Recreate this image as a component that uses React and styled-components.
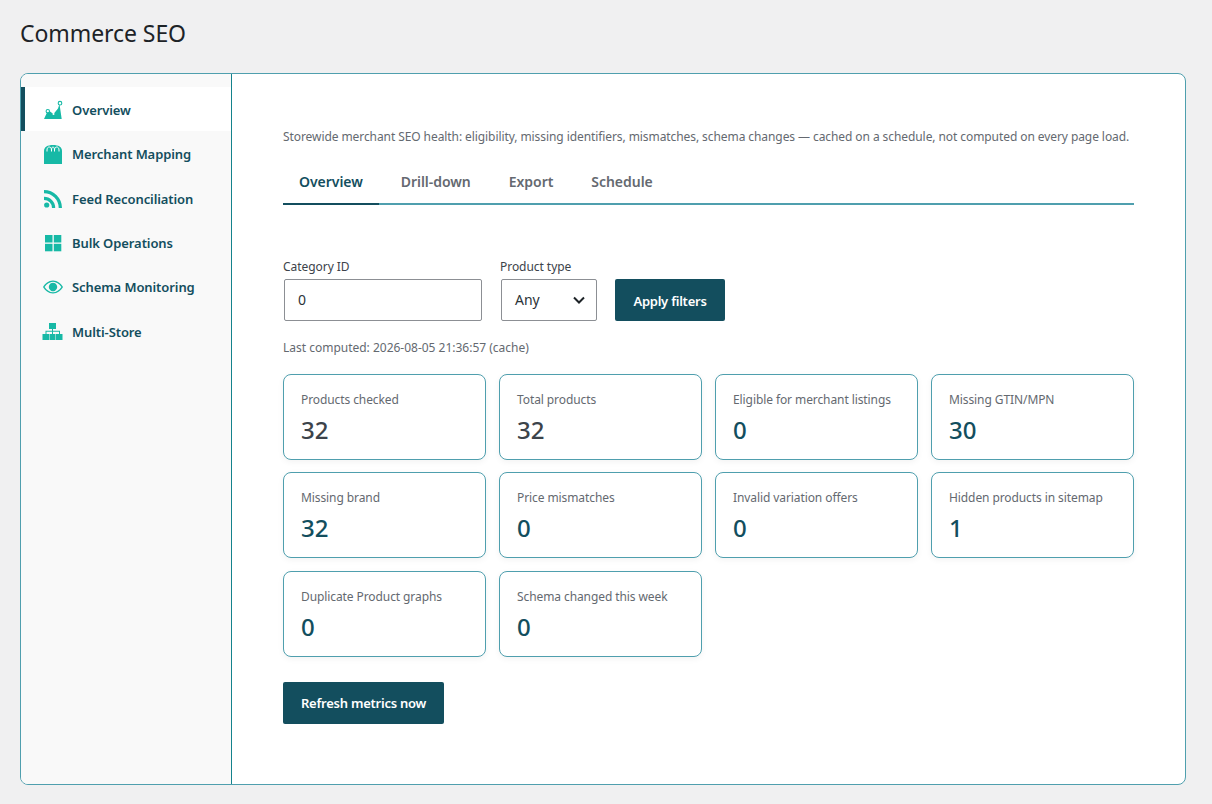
import React from 'react';
import styled, { createGlobalStyle } from 'styled-components';

const GlobalStyle = createGlobalStyle`
  html, body {
    margin: 0;
    padding: 0;
    background: #f0f0f1;
  }
  body {
    font-family: "Noto Sans", "Open Sans", sans-serif;
    color: #3c434a;
  }
`;

const Page = styled.div`
  width: 1212px;
  height: 804px;
  padding: 0 26px 0 20px;
  box-sizing: border-box;
  overflow: hidden;
`;

const Title = styled.h1`
  margin: 0;
  padding: 19px 0 0;
  height: 73px;
  box-sizing: border-box;
  font-size: 23px;
  line-height: 29px;
  font-weight: 400;
  letter-spacing: -0.07px;
  color: #1d2327;
`;

const Panel = styled.div`
  display: flex;
  height: 712px;
  box-sizing: border-box;
  border: 1px solid #4f9fae;
  border-radius: 8px;
  background: #fff;
  overflow: hidden;
`;

const Sidebar = styled.nav`
  width: 211px;
  flex: none;
  box-sizing: border-box;
  padding-top: 13px;
  background: #f9f9f9;
  border-right: 1px solid #14828c;
`;

const NavItem = styled.div`
  display: flex;
  align-items: center;
  gap: 10px;
  height: 44.3px;
  box-sizing: border-box;
  padding-top: 2px;
  padding-left: ${p => (p.$active ? '19px' : '23px')};
  background: ${p => (p.$active ? '#fff' : 'transparent')};
  border-left: ${p => (p.$active ? '4px solid #134e5e' : 'none')};
  font-size: 13px;
  font-weight: 600;
  letter-spacing: -0.09px;
  color: #134e5e;
`;

const IconBox = styled.svg`
  width: 18px;
  height: 18px;
  flex: none;
  fill: #17b9a6;
  overflow: visible;
`;

const Content = styled.main`
  flex: 1;
  padding: 54px 51px 0;
`;

const Intro = styled.p`
  margin: 0;
  font-size: 12px;
  line-height: 18px;
  letter-spacing: -0.08px;
  color: #646970;
  white-space: nowrap;
`;

const Tabs = styled.div`
  display: flex;
  margin-top: 15px;
  border-bottom: 2px solid #4f9fae;
`;

const Tab = styled.div`
  padding: 0 16px;
  margin: 0 6px -2px 0;
  height: 44px;
  box-sizing: border-box;
  line-height: 42px;
  font-size: 14px;
  font-weight: 600;
  letter-spacing: -0.04px;
  color: ${p => (p.$active ? '#134e5e' : '#646970')};
  border-bottom: 2px solid ${p => (p.$active ? '#134e5e' : 'transparent')};
`;

const Filters = styled.div`
  display: flex;
  align-items: flex-end;
  margin-top: 53px;
`;

const Field = styled.label`
  display: flex;
  flex-direction: column;
  margin-right: 18px;
  font-size: 12px;
  line-height: 18px;
  letter-spacing: -0.05px;
  color: #3c434a;
`;

const TextBox = styled.div`
  width: ${p => p.$width}px;
  height: 42px;
  margin: 3px 0 0 1px;
  display: flex;
  align-items: center;
  justify-content: space-between;
  box-sizing: border-box;
  padding: 0 11px 0 13px;
  border: 1px solid #8c8f94;
  border-radius: 2px;
  background: #fff;
  font-size: 14px;
  letter-spacing: 0;
  color: #2c3338;
`;

const Button = styled.button`
  height: 42px;
  min-width: 110px;
  padding: 1px 18px 0;
  border: none;
  border-radius: 2px;
  background: #134e5e;
  color: #fff;
  font-family: inherit;
  font-size: 13px;
  font-weight: 600;
  letter-spacing: -0.24px;
`;

const Computed = styled.p`
  margin: 18px 0 0;
  font-size: 12px;
  line-height: 18px;
  letter-spacing: -0.01px;
  color: #646970;
`;

const Grid = styled.div`
  display: grid;
  grid-template-columns: repeat(4, 203px);
  grid-auto-rows: 86px;
  column-gap: 13px;
  row-gap: 12.4px;
  margin-top: 17px;
`;

const Card = styled.div`
  box-sizing: border-box;
  padding: 16px 17px 0;
  border: 1px solid #4f9fae;
  border-radius: 8px;
  background: #fff;
  box-shadow: 0 2px 6px rgba(0, 0, 0, 0.05);
`;

const CardLabel = styled.div`
  font-size: 12px;
  line-height: 18px;
  letter-spacing: -0.09px;
  color: #646970;
`;

const CardValue = styled.div`
  margin-top: 6px;
  font-size: 24px;
  line-height: 30px;
  font-weight: 500;
  color: ${p => (p.$dark ? '#3c434a' : '#134e5e')};
`;

const RefreshRow = styled.div`
  margin-top: 25px;
`;

const icons = {
  chart: (
    <>
      <path d="M0 18 3 11.500 6 10.500 9.500 13 14 7.500 15.500 3 17.700 18Z" />
      <circle cx="3.800" cy="10.200" r="1.700" fill="#fff" stroke="#17b9a6" strokeWidth="1.100" />
      <circle cx="16" cy="2.200" r="1.800" fill="#fff" stroke="#17b9a6" strokeWidth="1.100" />
      <circle cx="9.500" cy="13" r="1" fill="#fff" />
    </>
  ),
  store: (
    <>
      <path d="M0 19V6C0 2 3.500 0 9 0s9 2 9 6v13Z" />
      <path d="M3 6.500V5C3 3.200 3.800 2 5.200 2S7.500 3.200 7.500 5v1.500M7.500 5C7.500 3.200 8.100 2 9 2s1.500 1.200 1.500 3v1.500M10.500 5c0-1.800.9-3 2.300-3S15 3.200 15 5v1.500" fill="none" stroke="#fff" strokeWidth="1" />
    </>
  ),
  rss: (
    <>
      <circle cx="2.700" cy="15" r="2.600" />
      <path d="M0 6.800V10a8 8 0 0 1 8 8h3.200A11.200 11.200 0 0 0 0 6.800Z" />
      <path d="M0 0v3.300A14.700 14.700 0 0 1 14.700 18H18A18 18 0 0 0 0 0Z" />
    </>
  ),
  grid: (
    <>
      <rect x="1" y="1" width="7.500" height="7.500" />
      <rect x="9.800" y="1" width="7.500" height="7.500" />
      <rect x="1" y="9.800" width="7.500" height="7.500" />
      <rect x="9.800" y="9.800" width="7.500" height="7.500" />
    </>
  ),
  eye: (
    <path d="M9 2.500C13.500 2.500 17 5.500 19 9c-2 3.500-5.500 6.500-10 6.500S1 12.500 -1 9C1 5.500 4.500 2.500 9 2.500Zm0 1.200C5.800 3.700 2.800 5.800 .6 9c2.200 3.200 5.200 5.300 8.400 5.300s6.200-2.100 8.400-5.300C15.200 5.800 12.200 3.700 9 3.700ZM9 4.800a4.200 4.200 0 1 1-.01 0Z" fillRule="evenodd" />
  ),
  network: (
    <>
      <rect x="5" y="0" width="7" height="6" />
      <rect x="-1.500" y="11" width="6.500" height="6" />
      <rect x="5.500" y="11" width="6" height="6" />
      <rect x="12" y="11" width="6.500" height="6" />
      <path d="M8 6h1v1.700h7V11h-1V8.800H9V11H8V8.800H2.500V11h-1V7.700H8Z" />
    </>
  ),
};

const navItems = [
  { key: 'chart', label: 'Overview', active: true },
  { key: 'store', label: 'Merchant Mapping' },
  { key: 'rss', label: 'Feed Reconciliation' },
  { key: 'grid', label: 'Bulk Operations' },
  { key: 'eye', label: 'Schema Monitoring' },
  { key: 'network', label: 'Multi-Store' },
];

const metrics = [
  ['Products checked', '32', true],
  ['Total products', '32', true],
  ['Eligible for merchant listings', '0'],
  ['Missing GTIN/MPN', '30'],
  ['Missing brand', '32'],
  ['Price mismatches', '0'],
  ['Invalid variation offers', '0'],
  ['Hidden products in sitemap', '1'],
  ['Duplicate Product graphs', '0'],
  ['Schema changed this week', '0'],
];

const App = () => {
  return (
    <Page>
      <GlobalStyle />
      <Title>Commerce SEO</Title>
      <Panel>
        <Sidebar>
          {navItems.map(item => (
            <NavItem key={item.key} $active={item.active}>
              <IconBox viewBox="0 0 18 18">{icons[item.key]}</IconBox>
              {item.label}
            </NavItem>
          ))}
        </Sidebar>
        <Content>
          <Intro>
            Storewide merchant SEO health: eligibility, missing identifiers, mismatches, schema changes — cached on a schedule, not computed on every page load.
          </Intro>
          <Tabs>
            <Tab $active>Overview</Tab>
            <Tab>Drill-down</Tab>
            <Tab>Export</Tab>
            <Tab>Schedule</Tab>
          </Tabs>
          <Filters>
            <Field>
              Category ID
              <TextBox $width={198}>0</TextBox>
            </Field>
            <Field>
              Product type
              <TextBox $width={96}>
                Any
                <svg width="12" height="8" viewBox="0 0 12 8" fill="none" stroke="#1d2327" strokeWidth="2">
                  <path d="M1 1.500 6 6.500 11 1.500" />
                </svg>
              </TextBox>
            </Field>
            <Button>Apply filters</Button>
          </Filters>
          <Computed>Last computed: 2026-08-05 21:36:57 (cache)</Computed>
          <Grid>
            {metrics.map(([label, value, dark]) => (
              <Card key={label}>
                <CardLabel>{label}</CardLabel>
                <CardValue $dark={dark}>{value}</CardValue>
              </Card>
            ))}
          </Grid>
          <RefreshRow>
            <Button>Refresh metrics now</Button>
          </RefreshRow>
        </Content>
      </Panel>
    </Page>
  );
};

export default App;
